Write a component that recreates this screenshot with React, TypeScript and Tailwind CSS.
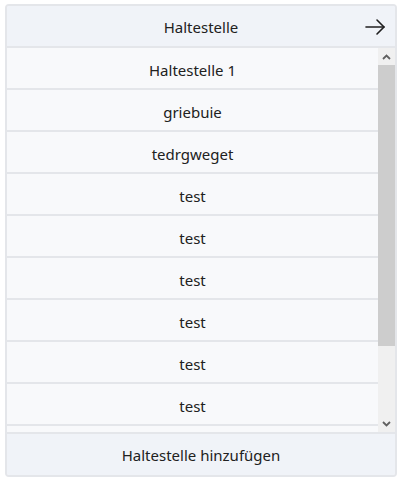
import { useState } from 'react';

const stops = [
  'Haltestelle 1',
  'griebuie',
  'tedrgweget',
  'test',
  'test',
  'test',
  'test',
  'test',
  'test',
  'test',
];

const ArrowIcon = () => (
  <svg width="22" height="18" viewBox="0 0 22 18" fill="none" stroke="#1f1f1f" strokeWidth="1.6" strokeLinecap="round" strokeLinejoin="round">
    <path d="M2 9h18" />
    <path d="M13 2l7 7-7 7" />
  </svg>
);

const Scrollbar = () => (
  <div className="flex w-[17px] shrink-0 flex-col bg-[#f0f0f0]">
    <div className="flex h-[17px] items-center justify-center">
      <svg width="9" height="6" viewBox="0 0 9 6" fill="none" stroke="#606060" strokeWidth="1.8">
        <path d="M1 5l3.5-3.5L8 5" />
      </svg>
    </div>
    <div className="flex flex-1 flex-col">
      <div className="h-[281px] bg-[#cdcdcd]" />
    </div>
    <div className="flex h-[17px] items-center justify-center">
      <svg width="9" height="6" viewBox="0 0 9 6" fill="none" stroke="#606060" strokeWidth="1.8">
        <path d="M1 1l3.5 3.5L8 1" />
      </svg>
    </div>
  </div>
);

export default function App() {
  const [items] = useState(stops);

  return (
    <div className="px-[5px] pt-[4px] font-['Noto_Sans',sans-serif] text-[15px] text-[#212121]">
      <div className="flex w-[392px] flex-col overflow-hidden rounded-[4px] border-2 border-[#e4e6ea] bg-[#f8f9fb]">
        <div className="relative flex h-[42px] items-center justify-center border-b-2 border-[#e4e6ea] bg-[#f0f3f8] pt-[2px]">
          <span>Haltestelle</span>
          <button type="button" className="absolute right-[9px] top-[12px]">
            <ArrowIcon />
          </button>
        </div>

        <div className="flex h-[384px]">
          <div className="flex-1 overflow-hidden">
            {items.map((name, i) => (
              <div
                key={i}
                className="flex h-[42px] items-center justify-center border-b-2 border-[#e4e6ea] bg-[#f8f9fb] pt-[4px]"
              >
                {name}
              </div>
            ))}
          </div>
          <Scrollbar />
        </div>

        <div className="flex h-[43px] items-center justify-center border-t-2 border-[#e4e6ea] bg-[#f0f3f8] pt-[2px]">
          Haltestelle hinzufügen
        </div>
      </div>
    </div>
  );
}
